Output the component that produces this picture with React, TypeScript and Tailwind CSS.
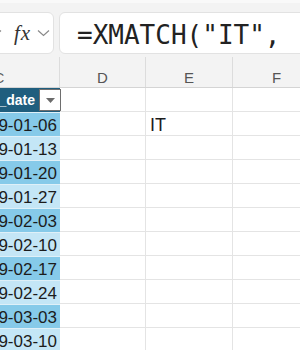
import React from "react";

const dates = [
  "2019-01-06",
  "2019-01-13",
  "2019-01-20",
  "2019-01-27",
  "2019-02-03",
  "2019-02-10",
  "2019-02-17",
  "2019-02-24",
  "2019-03-03",
  "2019-03-10",
];

function Chevron({ className }: { className?: string }) {
  return (
    <svg className={className} width="13" height="8" viewBox="0 0 13 8" fill="none">
      <path d="M1 1.5 L6.5 6.5 L12 1.5" stroke="#8a8a8a" strokeWidth="1.2" />
    </svg>
  );
}

export default function App() {
  return (
    <div className="w-[300px] h-[350px] overflow-hidden bg-[#f3f3f3] font-['Liberation_Sans',Arial,sans-serif]">
      {/* formula bar */}
      <div className="h-[57px] border-t-[3px] border-[#f9f9f9] pt-[9px] flex gap-[5px]">
        <div className="-ml-[12px] w-[66px] h-[42px] shrink-0 bg-white rounded-[6px] border border-[#e2e2e2] flex items-center overflow-hidden">
          <Chevron className="mr-[12px] shrink-0" />
          <span className="font-['Liberation_Serif',serif] italic text-[21px] leading-none text-[#333] tracking-[1px]">
            fx
          </span>
          <Chevron className="ml-[6px] shrink-0" />
        </div>
        <div className="flex-1 -mr-[12px] h-[42px] bg-white rounded-[6px] border border-[#e2e2e2] flex items-center pl-[17px] pt-[3px]">
          <span className="font-['DejaVu_Sans_Mono',monospace] text-[26px] leading-none text-[#222] whitespace-nowrap">
            =XMATCH("IT",
          </span>
        </div>
      </div>

      {/* column headers */}
      <div className="flex h-[31px] border-b border-[#d4d4d4] text-[15px] leading-[17px] text-[#555]">
        <div className="w-[60px] shrink-0 overflow-hidden border-r border-[#dcdcdc] relative">
          <div className="w-[122px] -ml-[62px] text-center pt-[12px]">C</div>
        </div>
        <div className="w-[86px] shrink-0 border-r border-[#dcdcdc] text-center pt-[12px]">D</div>
        <div className="w-[87px] shrink-0 border-r border-[#dcdcdc] text-center pt-[12px]">E</div>
        <div className="w-[87px] shrink-0 text-center pt-[12px]">F</div>
      </div>

      {/* table header row */}
      <div className="flex h-[24px]">
        <div className="w-[60px] shrink-0 bg-[#1f5e7e] flex items-center relative overflow-visible">
          <div className="w-[39px] overflow-hidden flex justify-end pr-[4px]">
            <span className="text-white font-bold text-[14px] whitespace-nowrap">week_date</span>
          </div>
          <div className="absolute left-[39px] top-[1px] w-[22px] h-[22px] bg-white border border-[#6e6e6e] flex items-center justify-center z-10">
            <svg width="9" height="5" viewBox="0 0 9 5">
              <path d="M0 0 L9 0 L4.5 5 Z" fill="#6b6b6b" />
            </svg>
          </div>
        </div>
        <div className="w-[86px] shrink-0 bg-white border-r border-b border-[#e4e4e4]" />
        <div className="w-[87px] shrink-0 bg-white border-r border-b border-[#e4e4e4]" />
        <div className="w-[87px] shrink-0 bg-white border-b border-[#e4e4e4]" />
      </div>

      {/* data rows */}
      {dates.map((d, i) => (
        <div key={d} className="flex h-[24px]">
          <div
            className={
              "w-[60px] shrink-0 overflow-hidden flex justify-end items-center pr-[3px] border-t border-[#dff0f8] " +
              (i % 2 === 0 ? "bg-[#86cae9]" : "bg-[#c4e6f6]")
            }
          >
            <span className="text-[17px] text-[#1c1c1c] whitespace-nowrap leading-none pt-[2px]">{d}</span>
          </div>
          <div className="w-[86px] shrink-0 bg-white border-r border-b border-[#e4e4e4]" />
          <div className="w-[87px] shrink-0 bg-white border-r border-b border-[#e4e4e4] flex items-center pl-[4px]">
            {i === 0 && <span className="text-[18px] text-[#1c1c1c] leading-none pt-[2px]">IT</span>}
          </div>
          <div className="w-[87px] shrink-0 bg-white border-b border-[#e4e4e4]" />
        </div>
      ))}
    </div>
  );
}
